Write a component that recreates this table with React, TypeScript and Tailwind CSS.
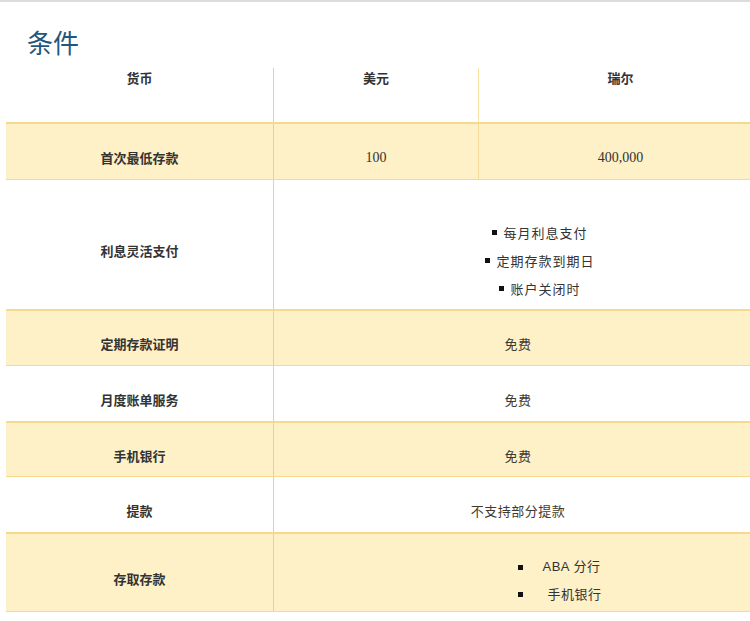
import React from 'react';

const cjk = "font-['Noto_Sans_CJK_SC',sans-serif]";
const serif = "font-['Liberation_Serif','Noto_Sans_CJK_SC',serif]";

const rows = [
  { label: '利息灵活支付', h: 'h-[129px]', hl: false, kind: 'list' },
  { label: '定期存款证明', h: 'h-[57px]', hl: true, value: '免费' },
  { label: '月度账单服务', h: 'h-[55px]', hl: false, value: '免费' },
  { label: '手机银行', h: 'h-[56px]', hl: true, value: '免费' },
  { label: '提款', h: 'h-[55px]', hl: false, value: '不支持部分提款' },
  { label: '存取存款', h: 'h-[80px]', hl: true, kind: 'channels' },
];

const Dot = () => <span className="inline-block w-[5px] h-[5px] bg-[#111]" />;

export default function App() {
  return (
    <div className={`w-[750px] h-[621px] bg-white border-t-2 border-[#dcdcdc] overflow-hidden ${cjk}`}>
      <h1 className="pl-[27px] pt-[23px] h-[66px] text-[26px] leading-[34px] text-[#1f5780]">条件</h1>

      <div className="ml-[6px] text-[13px] text-[#333]">
        {/* header */}
        <div className="flex h-[54px] font-bold">
          <div className="w-[268px] border-r border-[#f3d070] text-center">货币</div>
          <div className="w-[205px] border-r border-[#f7e2a4] text-center">美元</div>
          <div className="flex-1 pl-[12px] text-center">瑞尔</div>
        </div>

        {/* first deposit */}
        <div className="flex h-[58px] bg-[#fef0c7] border-t-2 border-b border-[#f7d98b]">
          <div className="w-[268px] pt-[12px] border-r border-[#f3d070] flex items-center justify-center font-bold">首次最低存款</div>
          <div className={`w-[205px] pt-[12px] border-r border-[#f5dc98] flex items-center justify-center text-[14px] ${serif}`}>100</div>
          <div className={`flex-1 pt-[12px] pl-[12px] flex items-center justify-center text-[14px] ${serif}`}>400,000</div>
        </div>

        {rows.map((r, i) => (
          <div
            key={i}
            className={`flex ${r.h} ${r.hl ? 'bg-[#fef0c7] border-t-2 border-b border-[#f7d98b]' : ''}`}
          >
            <div className="w-[268px] pt-[12px] border-r border-[#f3d070] flex items-center justify-center font-bold">{r.label}</div>
            <div className="flex-1 flex items-center justify-center pl-[12px] pt-[12px]">
              {r.kind === 'list' ? (
                <div className="flex flex-col items-center gap-[10px] pl-[44px] pt-[20px]">
                  {['每月利息支付', '定期存款到期日', '账户关闭时'].map(t => (
                    <div key={t} className="flex items-center gap-[6px] leading-[18px] tracking-[1px]">
                      <Dot />
                      <span>{t}</span>
                    </div>
                  ))}
                </div>
              ) : r.kind === 'channels' ? (
                <div className="flex flex-col gap-[9px] pl-[84px] pt-[4px]">
                  <div className="flex items-center leading-[18px]">
                    <Dot />
                    <span className="ml-[19px] font-['Liberation_Sans','Noto_Sans_CJK_SC',sans-serif] tracking-[0.5px]">ABA 分行</span>
                  </div>
                  <div className="flex items-center leading-[18px]">
                    <Dot />
                    <span className="ml-[24px] tracking-[0.5px]">手机银行</span>
                  </div>
                </div>
              ) : (
                <span className="text-[#3f3a30] tracking-[0.5px]">{r.value}</span>
              )}
            </div>
          </div>
        ))}
      </div>
    </div>
  );
}
